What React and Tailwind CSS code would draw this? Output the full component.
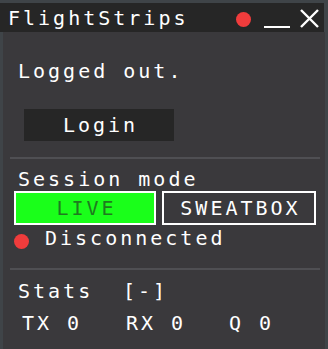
import React from "react";

const mono = { fontFamily: '"DejaVu Sans Mono", "Liberation Mono", monospace' };

export default function App() {
  return (
    <div
      className="w-[328px] h-[349px] bg-[#3f4448] pt-[3px] flex flex-col text-white text-[20px] leading-[20px] tracking-[3px]"
      style={mono}
    >
      {/* Title bar */}
      <div className="relative mr-[4px] h-[29px] bg-[#262626] flex items-center pl-[8px] shrink-0">
        <span>FlightStrips</span>
        <div className="absolute left-[236px] top-[9px] w-[15px] h-[15px] rounded-full bg-[#f03c3c]" />
        <div className="absolute left-[264px] top-[23px] w-[26px] h-[2px] bg-white" />
        <svg
          className="absolute left-[300px] top-[6px]"
          width="19"
          height="19"
          viewBox="0 0 19 19"
        >
          <path d="M1 1 L18 18 M18 1 L1 18" stroke="white" strokeWidth="2.4" fill="none" />
        </svg>
      </div>

      {/* Content */}
      <div className="ml-[3px] mr-[3px] flex-1 bg-[#3a393c] flex flex-col">
        <div className="ml-[15px] mt-[29px]">Logged out.</div>

        <div className="ml-[21px] mt-[28px] w-[150px] h-[32px] bg-[#262626] flex items-center justify-center pl-[3px]">
          Login
        </div>

        <div className="ml-[7px] mr-[5px] mt-[16px] h-[2px] bg-[#4f4f53]" />

        <div className="ml-[15px] mt-[10px]">Session mode</div>

        <div className="ml-[11px] mt-[2px] flex gap-[6px]">
          <div className="w-[142px] h-[34px] border-2 border-white bg-[#1aff1a] text-[#1f7a1f] flex items-center justify-center pl-[3px]">
            LIVE
          </div>
          <div className="w-[154px] h-[34px] border-2 border-white flex items-center justify-center pl-[3px]">
            SWEATBOX
          </div>
        </div>

        <div className="ml-[11px] mt-[3px] flex items-start">
          <div className="mt-[6px] w-[15px] h-[15px] rounded-full bg-[#f03c3c]" />
          <span className="ml-[16px]">Disconnected</span>
        </div>

        <div className="ml-[7px] mr-[5px] mt-[19px] h-[2px] bg-[#4f4f53]" />

        <div className="ml-[15px] mt-[11px] flex">
          <span className="w-[105px]">Stats</span>
          <span>[-]</span>
        </div>

        <div className="ml-[19px] mt-[12px] flex">
          <span className="w-[104px]">TX 0</span>
          <span className="w-[103px]">RX 0</span>
          <span>Q 0</span>
        </div>
      </div>
    </div>
  );
}
